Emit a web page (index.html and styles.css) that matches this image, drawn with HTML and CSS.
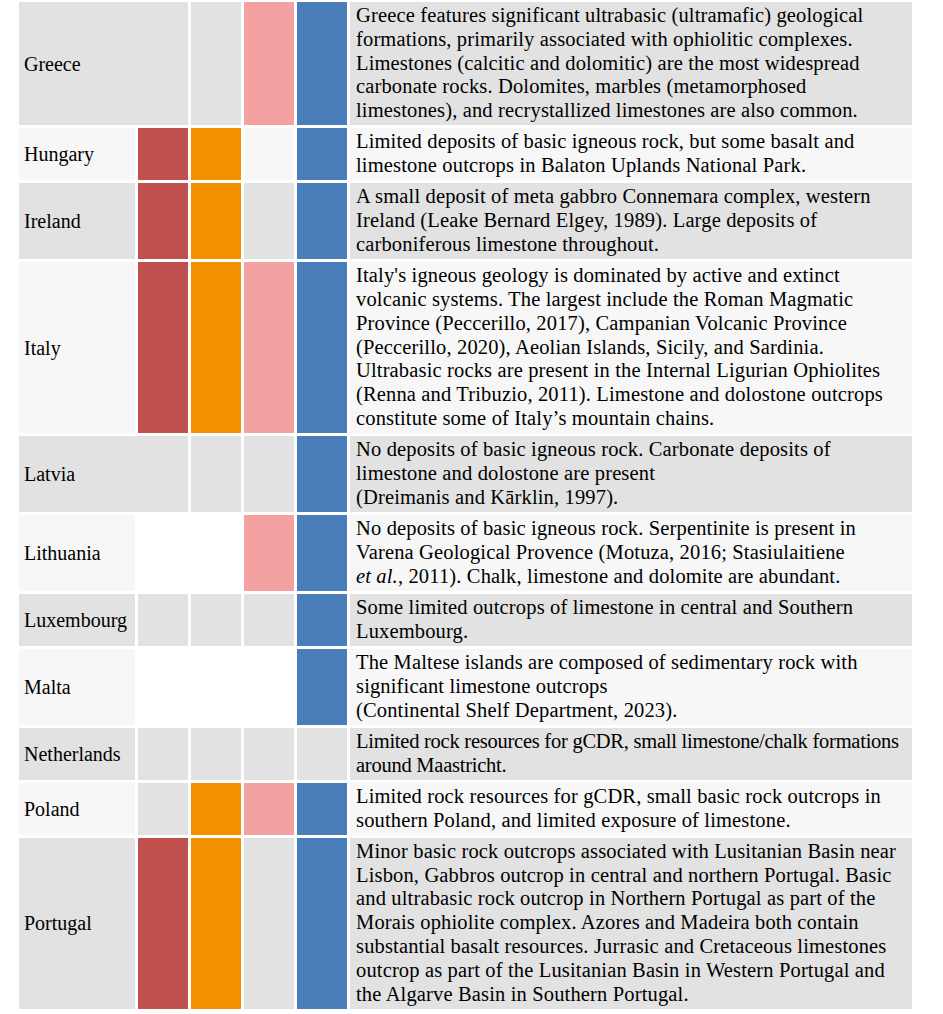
FILE: index.html
```html
<!DOCTYPE html>
<html lang="en">
<head>
<meta charset="utf-8">
<title>Rock resources by country</title>
<link rel="stylesheet" href="styles.css">
</head>
<body>
<table class="rocks">
  <colgroup>
    <col class="c-country">
    <col class="c-swatch">
    <col class="c-swatch">
    <col class="c-swatch">
    <col class="c-swatch">
    <col class="c-desc">
  </colgroup>
  <tbody>
    <tr class="row-dark">
      <td class="country" colspan="2">Greece</td>
      <td class="sw e-dark"></td>
      <td class="sw pink"></td>
      <td class="sw blue"></td>
      <td class="desc">Greece features significant ultrabasic (ultramafic) geological<br>formations, primarily associated with ophiolitic complexes.<br>Limestones (calcitic and dolomitic) are the most widespread<br>carbonate rocks. Dolomites, marbles (metamorphosed<br>limestones), and recrystallized limestones are also common.</td>
    </tr>
    <tr class="row-light">
      <td class="country">Hungary</td>
      <td class="sw red"></td>
      <td class="sw orange"></td>
      <td class="sw e-light"></td>
      <td class="sw blue"></td>
      <td class="desc">Limited deposits of basic igneous rock, but some basalt and<br>limestone outcrops in Balaton Uplands National Park.</td>
    </tr>
    <tr class="row-dark">
      <td class="country">Ireland</td>
      <td class="sw red"></td>
      <td class="sw orange"></td>
      <td class="sw e-dark"></td>
      <td class="sw blue"></td>
      <td class="desc">A small deposit of meta gabbro Connemara complex, western<br>Ireland (Leake Bernard Elgey, 1989). Large deposits of<br>carboniferous limestone throughout.</td>
    </tr>
    <tr class="row-light">
      <td class="country">Italy</td>
      <td class="sw red"></td>
      <td class="sw orange"></td>
      <td class="sw pink"></td>
      <td class="sw blue"></td>
      <td class="desc">Italy's igneous geology is dominated by active and extinct<br>volcanic systems. The largest include the Roman Magmatic<br>Province (Peccerillo, 2017), Campanian Volcanic Province<br>(Peccerillo, 2020), Aeolian Islands, Sicily, and Sardinia.<br>Ultrabasic rocks are present in the Internal Ligurian Ophiolites<br>(Renna and Tribuzio, 2011). Limestone and dolostone outcrops<br>constitute some of Italy’s mountain chains.</td>
    </tr>
    <tr class="row-dark">
      <td class="country" colspan="2">Latvia</td>
      <td class="sw e-dark"></td>
      <td class="sw e-dark"></td>
      <td class="sw blue"></td>
      <td class="desc">No deposits of basic igneous rock. Carbonate deposits of<br>limestone and dolostone are present<br>(Dreimanis and Kārklin, 1997).</td>
    </tr>
    <tr class="row-light">
      <td class="country">Lithuania</td>
      <td class="sw e-white"></td>
      <td class="sw e-white"></td>
      <td class="sw pink"></td>
      <td class="sw blue"></td>
      <td class="desc">No deposits of basic igneous rock. Serpentinite is present in<br>Varena Geological Provence (Motuza, 2016; Stasiulaitiene<br><i>et al.</i>, 2011). Chalk, limestone and dolomite are abundant.</td>
    </tr>
    <tr class="row-dark">
      <td class="country">Luxembourg</td>
      <td class="sw e-dark"></td>
      <td class="sw e-dark"></td>
      <td class="sw e-dark"></td>
      <td class="sw blue"></td>
      <td class="desc">Some limited outcrops of limestone in central and Southern<br>Luxembourg.</td>
    </tr>
    <tr class="row-light">
      <td class="country">Malta</td>
      <td class="sw e-white"></td>
      <td class="sw e-white"></td>
      <td class="sw e-white"></td>
      <td class="sw blue"></td>
      <td class="desc">The Maltese islands are composed of sedimentary rock with<br>significant limestone outcrops<br>(Continental Shelf Department, 2023).</td>
    </tr>
    <tr class="row-dark">
      <td class="country">Netherlands</td>
      <td class="sw e-dark"></td>
      <td class="sw e-dark"></td>
      <td class="sw e-dark"></td>
      <td class="sw e-dark"></td>
      <td class="desc tight">Limited rock resources for gCDR, small limestone/chalk formations<br>around Maastricht.</td>
    </tr>
    <tr class="row-light">
      <td class="country">Poland</td>
      <td class="sw e-dark"></td>
      <td class="sw orange"></td>
      <td class="sw pink"></td>
      <td class="sw blue"></td>
      <td class="desc">Limited rock resources for gCDR, small basic rock outcrops in<br>southern Poland, and limited exposure of limestone.</td>
    </tr>
    <tr class="row-dark">
      <td class="country">Portugal</td>
      <td class="sw red"></td>
      <td class="sw orange"></td>
      <td class="sw e-dark"></td>
      <td class="sw blue"></td>
      <td class="desc">Minor basic rock outcrops associated with Lusitanian Basin near<br>Lisbon, Gabbros outcrop in central and northern Portugal. Basic<br>and ultrabasic rock outcrop in Northern Portugal as part of the<br>Morais ophiolite complex. Azores and Madeira both contain<br>substantial basalt resources. Jurrasic and Cretaceous limestones<br>outcrop as part of the Lusitanian Basin in Western Portugal and<br>the Algarve Basin in Southern Portugal.</td>
    </tr>
  </tbody>
</table>
</body>
</html>
```

FILE: styles.css
```css
html, body {
  margin: 0;
  padding: 0;
  background: #ffffff;
}

.rocks {
  margin: -1px 0 0 16px;
  border-collapse: separate;
  border-spacing: 3px;
  table-layout: fixed;
  width: 899px;
  color: #000000;
}

.rocks td {
  box-sizing: border-box;
  padding: 0;
  font-family: "Liberation Serif", "Times New Roman", serif;
}

.c-country { width: 116px; }
.c-swatch { width: 50px; }
.c-desc { width: 562px; }

.row-dark .country,
.row-dark .desc {
  background: #e2e2e2;
}

.row-light .country,
.row-light .desc {
  background: #f7f7f7;
}

.rocks .country {
  font-size: 20px;
  line-height: 24px;
  padding-left: 5px;
  vertical-align: middle;
  white-space: nowrap;
}

.rocks .desc {
  font-size: 20.5px;
  line-height: 23.8px;
  letter-spacing: 0.15px;
  padding: 2px 6px 2.45px 6px;
  vertical-align: top;
  white-space: nowrap;
}

.rocks .desc.tight {
  letter-spacing: -0.25px;
}

.desc i {
  font-style: italic;
}

.red { background: #c0504d; }
.orange { background: #f29100; }
.pink { background: #f4a1a2; }
.blue { background: #4a7ebb; }
.e-dark { background: #e2e2e2; }
.e-light { background: #f7f7f7; }
.e-white { background: #ffffff; }
```
